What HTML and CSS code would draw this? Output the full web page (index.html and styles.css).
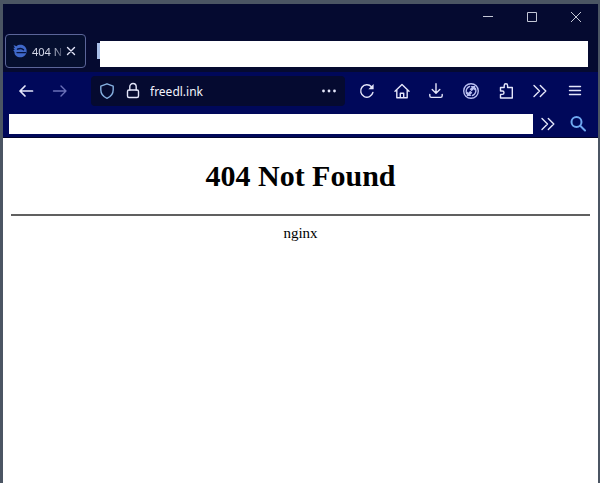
FILE: index.html
```
<!DOCTYPE html>
<html lang="en">
<head>
    <meta charset="UTF-8">
    <title>404 Not Found</title>
    <link rel="stylesheet" href="styles.css">
</head>
<body>
<div class="window">
    <div class="titlebar">
        <div class="controls">
            <button class="control" aria-label="Minimize">
                <svg width="12" height="12" viewBox="0 0 12 12"><path d="M1 5.5h10"/></svg>
            </button>
            <button class="control" aria-label="Maximize">
                <svg width="12" height="12" viewBox="0 0 12 12"><path d="M1.5 1.5h9v9h-9z"/></svg>
            </button>
            <button class="control" aria-label="Close">
                <svg width="12" height="12" viewBox="0 0 12 12"><path d="M1 1l10 10M11 1L1 11"/></svg>
            </button>
        </div>
        <div class="tabs">
            <div class="tab">
                <svg class="favicon" width="14" height="14" viewBox="0 0 14 14">
                    <path d="M.5 1l3 1.200C5 .6 9 .2 11.300 2c2.700 2 3.200 6.200 1 9-2.200 2.700-6.500 3.200-9.300.8C1.800 10.700 1.400 9.500 1.500 8L.2 6l1.500.1L.3 3.800l1.600.2z" fill="#3f68c9"/>
                    <path d="M4.500 5.200c2.500-1.200 4.500-1 6 .6M4 8.600h8.500" fill="none" stroke="#06133f" stroke-width="1.400"/>
                </svg>
                <span class="tab-title">404 N</span>
                <button class="tab-close" aria-label="Close tab">
                    <svg width="10" height="10" viewBox="0 0 10 10"><path d="M1.500 1.500l7 7M8.500 1.500l-7 7"/></svg>
                </button>
            </div>
            <div class="marker"></div>
            <div class="strip"></div>
        </div>
    </div>

    <div class="toolbar">
        <div class="nav">
            <div class="history">
                <button class="icon" aria-label="Back">
                    <svg width="18" height="18" viewBox="0 0 18 18"><path d="M15.500 9H3M8 4L3 9l5 5" stroke-width="1.700"/></svg>
                </button>
                <button class="icon forward" aria-label="Forward">
                    <svg width="18" height="18" viewBox="0 0 18 18"><path d="M2.500 9H15M10 4l5 5-5 5"/></svg>
                </button>
            </div>
            <div class="urlbar">
                <button class="icon shield" aria-label="Tracking protection">
                    <svg width="18" height="18" viewBox="0 0 18 18"><path d="M9 1.800l6.200 2.400v3.600c0 3.800-2.500 7-6.200 8.500-3.700-1.500-6.200-4.700-6.200-8.500V4.200z"/></svg>
                </button>
                <button class="icon" aria-label="Site information">
                    <svg width="18" height="18" viewBox="0 0 18 18"><rect x="3.500" y="8" width="11" height="7.500" rx="1.500"/><path d="M5.800 8V4.700a3.200 3.200 0 0 1 6.400 0V8"/></svg>
                </button>
                <input class="url" type="text" value="freedl.ink" aria-label="Address">
                <button class="icon" aria-label="Page actions">
                    <svg width="18" height="18" viewBox="0 0 18 18"><g fill="#e4e6fa" stroke="none"><circle cx="3.500" cy="9" r="1.400"/><circle cx="9" cy="9" r="1.400"/><circle cx="14.500" cy="9" r="1.400"/></g></svg>
                </button>
            </div>
            <div class="actions">
                <button class="icon" aria-label="Reload">
                    <svg width="18" height="18" viewBox="0 0 18 18"><path d="M14.900 10.500A6.200 6.200 0 1 1 13.500 4.800"/><path d="M15.600 2v5.200h-5.200z" fill="#e4e6fa" stroke="none"/></svg>
                </button>
                <button class="icon" aria-label="Home">
                    <svg width="18" height="18" viewBox="0 0 18 18"><path d="M2 9.200L9 2.500l7 6.700M3.800 8v7.700h10.400V8M7.300 15.500v-4.300h3.400v4.300"/></svg>
                </button>
                <button class="icon" aria-label="Downloads">
                    <svg width="18" height="18" viewBox="0 0 18 18"><path d="M9 1.800V11M5.200 7.500L9 11.200l3.800-3.700M2.800 12.500v1.300c0 .9.700 1.600 1.600 1.600h9.200c.9 0 1.600-.7 1.600-1.600v-1.300"/></svg>
                </button>
                <button class="icon sync" aria-label="Sync">
                    <svg width="18" height="18" viewBox="0 0 18 18">
                        <circle cx="9" cy="9" r="7.300"/>
                        <path d="M4.500 11.500C3.400 8.500 4.800 5.500 7.500 4.500M13.500 6.500c1.100 3-.3 6-3 7"/>
                        <path d="M8.500 4h4.700v4.700l-1.500-1.500-2 2-2-2 2-2zM9.500 14H4.800V9.300l1.500 1.500 2-2 2 2-2 2z" fill="#b9bff0" stroke="none"/>
                    </svg>
                </button>
                <button class="icon" aria-label="Extensions">
                    <svg width="18" height="18" viewBox="0 0 18 18"><path d="M7.200 5.500V3.500a1.700 1.700 0 0 1 3.400 0v2h4.700V16H3.500v-3.600h1.800a1.700 1.700 0 0 0 0-3.400H3.500V5.500z"/></svg>
                </button>
                <button class="icon" aria-label="More tools">
                    <svg width="18" height="18" viewBox="0 0 18 18"><path d="M3 3.500L8.500 9 3 14.500M9.300 3.500L14.800 9l-5.500 5.500"/></svg>
                </button>
                <button class="icon" aria-label="Menu">
                    <svg width="18" height="18" viewBox="0 0 18 18"><path d="M3.500 4.500h11M3.500 8.500h11M3.500 12.500h11"/></svg>
                </button>
            </div>
        </div>
        <div class="bookmarks">
            <div class="bookmark-list"></div>
            <button class="icon" aria-label="More bookmarks">
                <svg width="18" height="18" viewBox="0 0 18 18"><path d="M3 3.500L8.500 9 3 14.500M9.300 3.500L14.800 9l-5.500 5.500"/></svg>
            </button>
            <button class="icon search" aria-label="Search">
                <svg width="18" height="18" viewBox="0 0 18 18"><circle cx="7.500" cy="7" r="5"/><path d="M11.200 10.800l4.800 4.700"/></svg>
            </button>
        </div>
    </div>

    <main class="page">
        <h1>404 Not Found</h1>
        <hr>
        <p>nginx</p>
    </main>
</div>
</body>
</html>
```
FILE: styles.css
```
* {
    box-sizing: border-box;
    margin: 0;
    padding: 0;
}

body {
    display: flex;
    min-height: 100vh;
    padding: 4px 2px 0 3px;
    background: #4b5563;
}

button {
    border: 0;
    background: none;
    cursor: pointer;
}

svg {
    display: block;
    fill: none;
    stroke: #e4e6fa;
    stroke-width: 1.4;
    stroke-linecap: round;
    stroke-linejoin: round;
}

.window {
    display: flex;
    flex: 1;
    flex-direction: column;
    min-width: 0;
    background: #fff;
    font-family: "Noto Sans", "Open Sans", sans-serif;
}

/* title bar and tabs */
.titlebar {
    height: 68px;
    background: #050a30;
}

.controls {
    display: flex;
    justify-content: flex-end;
    height: 30px;
}

.control {
    display: flex;
    align-items: center;
    justify-content: center;
    width: 44px;
    height: 26px;
}

.control svg {
    stroke: #c4c7d6;
    stroke-width: 1;
    stroke-linecap: butt;
}

.tabs {
    display: flex;
    padding: 0 10px 0 2px;
}

.tab {
    display: flex;
    align-items: center;
    width: 81px;
    height: 34px;
    padding: 0 9px 0 7px;
    border: 1px solid #5b6599;
    border-radius: 4px;
    background: #050f2f;
}

.favicon {
    flex: none;
    stroke: none;
}

.tab-title {
    flex: 1;
    margin-left: 5px;
    color: #d3d7e8;
    font-size: 11px;
    white-space: nowrap;
    -webkit-mask-image: linear-gradient(to right, #000 60%, transparent);
    mask-image: linear-gradient(to right, #000 60%, transparent);
}

.tab-close {
    flex: none;
}

.marker {
    width: 3px;
    height: 16px;
    margin: 9px 0 0 11px;
    background: #a9bfe8;
}

.strip {
    flex: 1;
    height: 26px;
    margin-top: 7px;
    background: #fff;
}

/* navigation */
.toolbar {
    padding: 4px 5px 3px 6px;
    border-bottom: 1px solid #02042c;
    background: #00085a;
}

.nav {
    display: flex;
    align-items: center;
}

.history {
    display: flex;
    gap: 16px;
    padding: 0 22px 0 8px;
}

.icon {
    flex: none;
    width: 18px;
    height: 18px;
}

.forward svg {
    stroke: #6a70b8;
}

.urlbar {
    display: flex;
    flex: 1;
    align-items: center;
    gap: 8px;
    min-width: 0;
    height: 30px;
    padding: 0 7px;
    border-radius: 4px;
    background: #050a30;
}

.shield svg {
    stroke: #86b0e0;
}

.url {
    flex: 1;
    min-width: 0;
    border: 0;
    outline: 0;
    background: none;
    color: #f2f3fc;
    font: 12px "Noto Sans", "Open Sans", sans-serif;
}

.actions {
    display: flex;
    flex: none;
    justify-content: space-between;
    width: 248px;
    padding: 0 9px 0 13px;
}

.sync svg {
    stroke: #b9bff0;
}

.bookmarks {
    display: flex;
    align-items: center;
    padding: 8px 6px 0 0;
}

.bookmark-list {
    flex: 1;
    height: 20px;
    margin-right: 6px;
    background: #fff;
}

.search {
    margin-left: 12px;
}

.search svg {
    stroke: #6fa8f0;
    stroke-width: 2;
}

/* error page */
.page {
    padding: 20px 8px;
    font-family: "Liberation Serif", serif;
    color: #000;
    text-align: center;
}

.page h1 {
    font-size: 30px;
    line-height: 36px;
}

.page hr {
    height: 2px;
    margin: 20px 0 8px;
    border: 0;
    background: #606060;
}

.page p {
    font-size: 15px;
    line-height: 18px;
}
```
